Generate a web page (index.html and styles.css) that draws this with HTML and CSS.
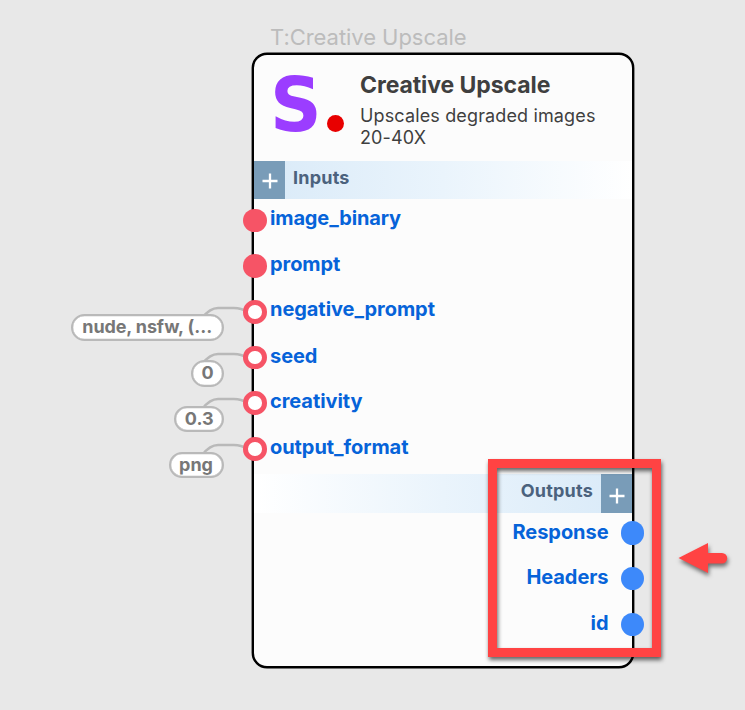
FILE: index.html
```html
<!DOCTYPE html>
<html lang="en">
<head>
<meta charset="utf-8">
<title>Creative Upscale</title>
<link rel="stylesheet" href="styles.css">
</head>
<body>
<main class="canvas">
  <div class="node-caption">T:Creative Upscale</div>
  <section class="node">
    <header class="node-header">
      <div class="logo"><span class="logo-letter">S</span><i class="logo-dot"></i></div>
      <div class="heading">
        <h1>Creative Upscale</h1>
        <p>Upscales degraded images<br>20-40X</p>
      </div>
    </header>
    <div class="bar inputs-bar">
      <button class="add"><svg width="16" height="16" viewBox="0 0 16 16"><path d="M8 .5v15M.5 8h15"/></svg></button>
      <span class="bar-title">Inputs</span>
    </div>
    <ul class="ports inputs">
      <li><i class="port"></i><span>image_binary</span></li>
      <li><i class="port"></i><span>prompt</span></li>
      <li><svg class="wire" width="48" height="14" viewBox="0 0 48 14"><path d="M1 13Q9 3 17 3H33Q40 3 47 7"/></svg><b class="value value-nude">nude, nsfw, (…</b><i class="port open"></i><span>negative_prompt</span></li>
      <li><svg class="wire" width="48" height="14" viewBox="0 0 48 14"><path d="M1 13Q9 3 17 3H33Q40 3 47 7"/></svg><b class="value value-seed">0</b><i class="port open"></i><span>seed</span></li>
      <li><svg class="wire" width="48" height="14" viewBox="0 0 48 14"><path d="M1 13Q9 3 17 3H33Q40 3 47 7"/></svg><b class="value value-creativity">0.3</b><i class="port open"></i><span>creativity</span></li>
      <li><svg class="wire" width="48" height="14" viewBox="0 0 48 14"><path d="M1 13Q9 3 17 3H33Q40 3 47 7"/></svg><b class="value value-format">png</b><i class="port open"></i><span>output_format</span></li>
    </ul>
    <div class="bar outputs-bar">
      <span class="bar-title">Outputs</span>
      <button class="add"><svg width="16" height="16" viewBox="0 0 16 16"><path d="M8 .5v15M.5 8h15"/></svg></button>
    </div>
    <ul class="ports outputs">
      <li><span>Response</span><i class="port"></i></li>
      <li><span>Headers</span><i class="port"></i></li>
      <li><span>id</span><i class="port"></i></li>
    </ul>
  </section>
  <div class="highlight"></div>
  <svg class="arrow" width="60" height="46" viewBox="0 0 60 46"><path d="M3.500 18L33 3V13H47A5 5 0 0 1 47 23.500H33V33Z"/></svg>
</main>
</body>
</html>
```

FILE: styles.css
```css
* { box-sizing: border-box; }
body { margin: 0; background: #e8e8e8; font-family: Inter, "Liberation Sans", sans-serif; }
.canvas { position: relative; width: 745px; height: 710px; overflow: hidden; }
.node-caption { position: absolute; left: 270px; top: 23px; font-size: 22px; line-height: 28px; letter-spacing: -.05px; color: #bcbcbc; white-space: nowrap; }
.node {
  position: absolute; left: 252px; top: 53px; width: 382px; height: 615px;
  border: 2px solid #000; border-radius: 15px; background: #fcfcfc;
  box-shadow: 0 0 0 .4px #000;
}
.node-header { display: flex; height: 106px; padding-left: 16px; }
.logo { display: flex; width: 90px; align-items: flex-start; }
.logo-letter { width: 57px; margin-top: 7px; font: bold 74px/86px "DejaVu Sans", sans-serif; color: #9b3dff; transform: scaleX(.97); transform-origin: left; }
.logo-dot { width: 17px; height: 17px; margin-top: 59.500px; border-radius: 50%; background: #e80000; }
.heading { padding-top: 16px; color: #3f3f3f; white-space: nowrap; }
h1 { margin: 0; font-size: 23px; line-height: 28px; font-weight: 700; letter-spacing: -.08px; }
p { margin: 6px 0 0; font-size: 18px; line-height: 22px; letter-spacing: .14px; }
.bar { display: flex; height: 38px; }
.inputs-bar { background: linear-gradient(90deg, #d9eaf8, #eaf4fc 50%, #fff); }
.outputs-bar { height: 39px; justify-content: flex-end; background: linear-gradient(270deg, #d9eaf8, #eaf4fc 50%, #fff); }
.add { display: flex; width: 31px; padding: 2px 0 0; border: 0; background: #799cb8; align-items: center; justify-content: center; }
.outputs-bar .add { padding-top: 4px; }
.add path { fill: none; stroke: #fff; stroke-width: 2.3; }
.bar-title { padding: 0 8px; font-size: 18px; line-height: 34px; font-weight: 700; letter-spacing: .22px; color: #4b627d; }
.ports { margin: 0; padding: 0; list-style: none; color: #0663d9; font-size: 20px; font-weight: 700; letter-spacing: -.06px; }
.ports li { position: relative; display: flex; height: 45.7px; align-items: center; white-space: nowrap; }
.ports span { position: relative; top: -2px; }
.inputs { height: 275px; padding-left: 16px; }
.inputs li:first-child { margin-top: -1.400px; }
.inputs li:first-child span { letter-spacing: -.14px; }
.inputs li:nth-child(3) span { top: -3px; }
.inputs + .outputs-bar { margin-top: 1.400px; }
.outputs { padding-right: 23.500px; margin-top: -2.800px; }
.outputs li { justify-content: flex-end; }
.outputs li:first-child span, .outputs li:last-child span { top: -1px; }
.port { position: absolute; left: -27px; width: 23.500px; height: 23.500px; border-radius: 50%; background: #f65466; }
.port.open { border: 5px solid #f65466; background: #fff; }
.outputs .port { left: auto; right: -35.500px; background: #3d89fa; }
.wire { position: absolute; left: -69px; top: 16px; }
.wire path { fill: none; stroke: #b9b9b9; stroke-width: 2.3; }
.value { position: absolute; right: 408.500px; top: 25.500px; height: 26.500px; border: 2px solid #b9b9b9; border-radius: 14px; background: #fff; color: #777; font-size: 18px; line-height: 22px; font-weight: 700; letter-spacing: 0; text-align: center; box-shadow: inset 0 0 0 .3px #b9b9b9; }
.value-nude { width: 152.500px; letter-spacing: -.12px; }
.value-seed { width: 33px; padding-left: 1px; }
.value-creativity { width: 49.500px; padding-left: 1px; }
.value-format { width: 55px; }
.highlight { position: absolute; left: 488px; top: 459px; width: 173px; height: 198px; border: 9px solid #ff4343; filter: drop-shadow(1px 3px 2px #0009); }
.arrow { position: absolute; left: 675px; top: 540px; fill: #ff4343; filter: drop-shadow(1px 3px 2px #0008); }
```
